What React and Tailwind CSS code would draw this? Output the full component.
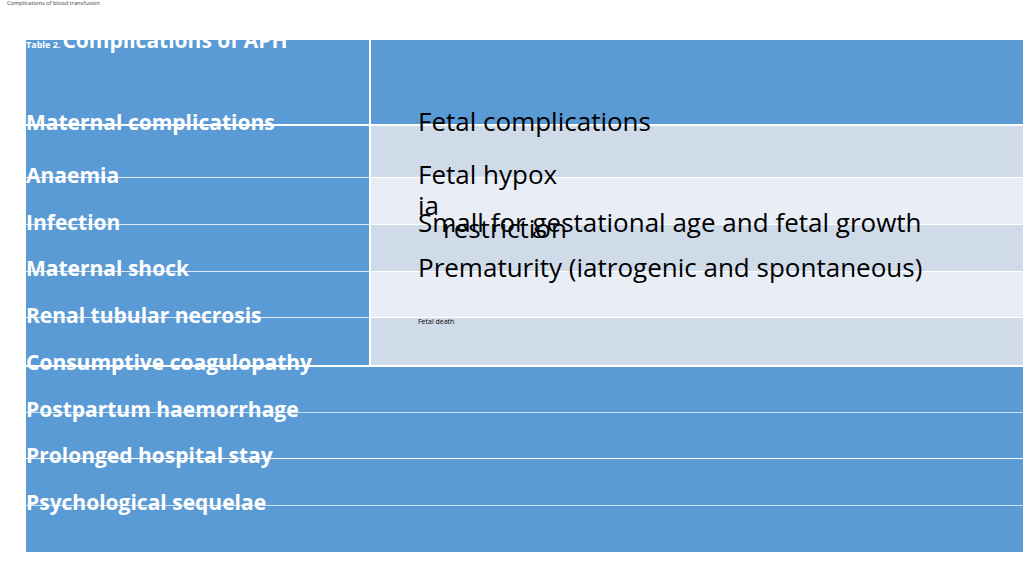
import React from 'react';

// label and the height of its row (px), top of each row = centre of text - 13
const maternal = [
  ['Anaemia', 'h-[47px]'],
  ['Infection', 'h-[46px]'],
  ['Maternal shock', 'h-[47px]'],
  ['Renal tubular necrosis', 'h-[47px]'],
  ['Consumptive coagulopathy', 'h-[47px]'],
  ['Postpartum haemorrhage', 'h-[46px]'],
  ['Prolonged hospital stay', 'h-[47px]'],
  ['Psychological sequelae', 'h-[47px]'],
];

// stripes of the right column, between the header line and the full-width rows
const stripes = [
  'h-[52px] bg-[#d0dbea] border-b border-white',
  'h-[47px] bg-[#e9edf5] border-b border-white',
  'h-[47px] bg-[#d0dbea] border-b border-white',
  'h-[46px] bg-[#e9edf5] border-b border-white',
  'flex-1 bg-[#d0dbea]',
];

const Backdrop = () => (
  <div className="col-start-1 row-start-1 flex flex-col">
    {/* header row */}
    <div className="flex h-[84px]">
      <div className="w-[343px] bg-[#5b9bd5]" />
      <div className="w-[2px] bg-white" />
      <div className="flex-1 bg-[#5b9bd5]" />
    </div>
    <div className="h-[2px] bg-white" />

    {/* two-column body */}
    <div className="flex h-[239px]">
      <div className="w-[343px] bg-[#5b9bd5] flex flex-col">
        <div className="h-[52px] border-b border-white/80" />
        <div className="h-[47px] border-b border-white/80" />
        <div className="h-[47px] border-b border-white/80" />
        <div className="h-[46px] border-b border-white/80" />
      </div>
      <div className="w-[2px] bg-white" />
      <div className="flex-1 flex flex-col">
        {stripes.map((s, i) => (
          <div key={i} className={s} />
        ))}
      </div>
    </div>
    <div className="h-[2px] bg-white" />

    {/* full-width rows */}
    <div className="flex-1 bg-[#5b9bd5] flex flex-col">
      <div className="h-[46px] border-b border-white/70" />
      <div className="h-[46px] border-b border-white" />
      <div className="h-[47px] border-b border-white/70" />
    </div>
  </div>
);

const Labels = () => (
  <div className="col-start-1 row-start-1 flex">
    {/* left: maternal */}
    <div className="w-[345px] flex flex-col text-white font-bold text-[21px]">
      <div className="-mt-[12px] h-[24px] leading-[24px] flex items-baseline gap-[2px] whitespace-nowrap">
        <span className="text-[9px]">Table 2.</span>
        <span>Complications of APH</span>
      </div>
      <div className="h-[58px]" />
      <div className="h-[53px] leading-[25px]">Maternal complications</div>
      {maternal.map(([m, h]) => (
        <div key={m} className={`${h} leading-[25px] whitespace-nowrap`}>{m}</div>
      ))}
    </div>

    {/* right: fetal */}
    <div className="flex-1 pl-[47px] text-black text-[26px] leading-[28px]">
      <div className="h-[67px]" />
      <div className="h-[52px]">Fetal complications</div>
      <div className="h-[49px] w-[60px] leading-[31px]">
        <span className="whitespace-nowrap">Fetal hypox</span><wbr />ia
      </div>
      <div className="h-[6px] whitespace-nowrap">Small for gestational age and fetal growth</div>
      <div className="h-[39px] pl-[25px]">restriction</div>
      <div className="h-[65px] whitespace-nowrap">Prematurity (iatrogenic and spontaneous)</div>
      <div className="text-[7px] leading-[7px]">Fetal death</div>
    </div>
  </div>
);

export default function App() {
  return (
    <div className="w-[1024px] h-[576px] bg-white overflow-hidden" style={{ fontFamily: '"Open Sans", "Liberation Sans", sans-serif' }}>
      <div className="pl-[7px] text-[5.7px] leading-[7px] text-[#404040]">Complications of blood transfusion</div>
      <div className="ml-[26px] mt-[33px] w-[997px] h-[512px] grid overflow-hidden">
        <Backdrop />
        <Labels />
      </div>
    </div>
  );
}
